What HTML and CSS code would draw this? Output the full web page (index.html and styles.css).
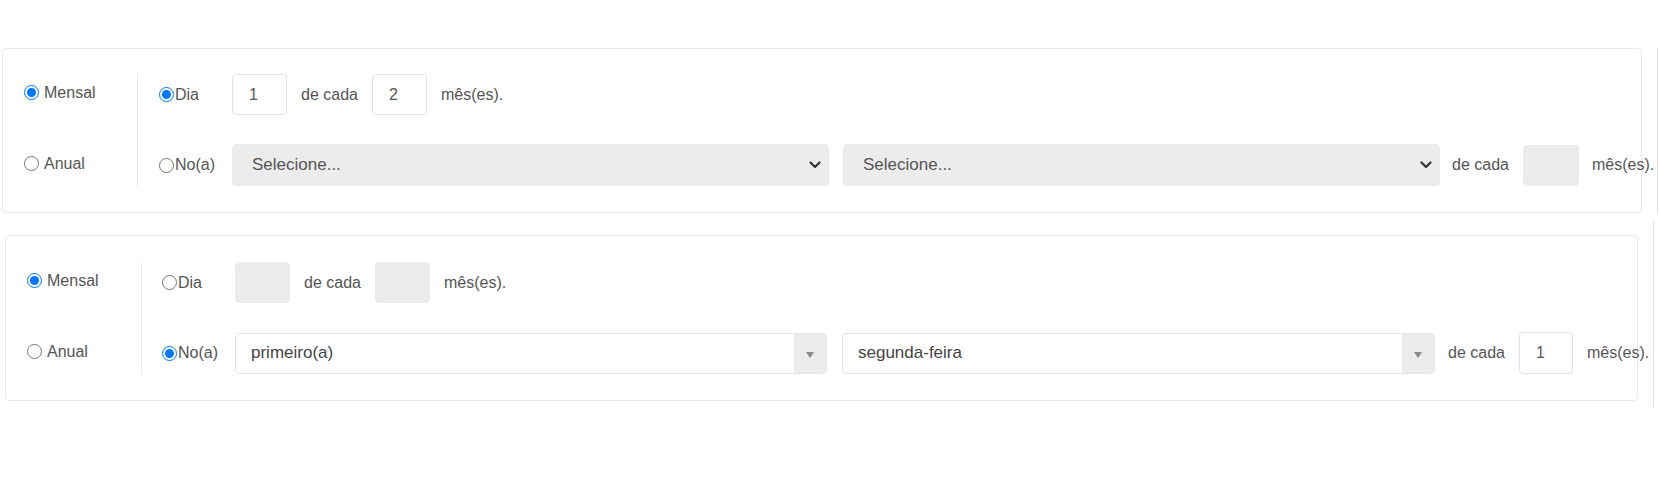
FILE: index.html
```html
<!DOCTYPE html>
<html lang="pt">
<head>
<meta charset="utf-8">
<title>Recorrência</title>
<link rel="stylesheet" href="styles.css">
</head>
<body>
<div class="page">
  <div class="frame frame-a">
    <div class="panel">
      <div class="left">
        <label class="opt"><input type="radio" name="t1" checked><span>Mensal</span></label>
        <label class="opt"><input type="radio" name="t1"><span>Anual</span></label>
      </div>
      <div class="right">
        <div class="row row-1">
          <label class="lbl"><input type="radio" name="m1" checked><span>Dia</span></label>
          <div class="inp">1</div>
          <span class="txt">de cada</span>
          <div class="inp">2</div>
          <span class="txt">mês(es).</span>
        </div>
        <div class="row row-2">
          <label class="lbl"><input type="radio" name="m1"><span>No(a)</span></label>
          <div class="sel sel-w1">
            <span class="sel-text">Selecione...</span>
            <svg class="chev" width="12" height="8" viewBox="0 0 12 8"><path d="M1.5 1.5 L6 6 L10.5 1.5" fill="none" stroke="#343434" stroke-width="2.2" stroke-linecap="round" stroke-linejoin="round"/></svg>
          </div>
          <div class="sel sel-w1">
            <span class="sel-text">Selecione...</span>
            <svg class="chev" width="12" height="8" viewBox="0 0 12 8"><path d="M1.5 1.5 L6 6 L10.5 1.5" fill="none" stroke="#343434" stroke-width="2.2" stroke-linecap="round" stroke-linejoin="round"/></svg>
          </div>
          <span class="txt txt-a">de cada</span>
          <div class="inp inp-off inp-b"></div>
          <span class="txt txt-b">mês(es).</span>
        </div>
      </div>
    </div>
  </div>

  <div class="frame frame-b">
    <div class="panel">
      <div class="left">
        <label class="opt"><input type="radio" name="t2" checked><span>Mensal</span></label>
        <label class="opt"><input type="radio" name="t2"><span>Anual</span></label>
      </div>
      <div class="right">
        <div class="row row-1">
          <label class="lbl"><input type="radio" name="m2"><span>Dia</span></label>
          <div class="inp inp-off"></div>
          <span class="txt">de cada</span>
          <div class="inp inp-off"></div>
          <span class="txt">mês(es).</span>
        </div>
        <div class="row row-2">
          <label class="lbl"><input type="radio" name="m2" checked><span>No(a)</span></label>
          <div class="s2 s2-w1">
            <span class="s2-text">primeiro(a)</span>
            <span class="s2-arrow"><svg width="8" height="6" viewBox="0 0 8 6"><path d="M0 0 H8 L4 6 Z" fill="#8a8a8a"/></svg></span>
          </div>
          <div class="s2 s2-w2">
            <span class="s2-text">segunda-feira</span>
            <span class="s2-arrow"><svg width="8" height="6" viewBox="0 0 8 6"><path d="M0 0 H8 L4 6 Z" fill="#8a8a8a"/></svg></span>
          </div>
          <span class="txt txt-c">de cada</span>
          <div class="inp inp-c">1</div>
          <span class="txt">mês(es).</span>
        </div>
      </div>
    </div>
  </div>
</div>
</body>
</html>
```

FILE: styles.css
```css
* { box-sizing: border-box; }

html, body {
  margin: 0;
  padding: 0;
  background: #ffffff;
}

body {
  font-family: "Liberation Sans", Arial, sans-serif;
  font-size: 16px;
  color: #555555;
}

.page {
  padding-top: 48px;
  display: flex;
  flex-direction: column;
}

.frame {
  border-right: 1px solid #e2e2e2;
}

.frame-a {
  width: 1658px;
  padding-left: 2px;
}

.frame-b {
  width: 1654px;
  margin-top: 8px;
  padding: 14px 0 6px 5px;
}

.panel {
  display: flex;
  border: 1px solid #e9e9e9;
  border-radius: 4px;
  padding: 25px 0 26px 0;
  background: #ffffff;
}

.frame-a .panel { width: 1640px; }
.frame-b .panel { width: 1633px; padding-top: 26px; }

.left {
  flex: none;
  width: 134px;
  padding-left: 21px;
  display: flex;
  flex-direction: column;
  gap: 34px;
}

.frame-b .left { width: 135px; }

.opt {
  height: 37px;
  display: flex;
  align-items: center;
  gap: 5px;
}

input[type="radio"] {
  width: 15px;
  height: 15px;
  margin: 0;
  flex: none;
  accent-color: #0075ff;
}

.right {
  flex: 1;
  border-left: 1px solid #e9e9e9;
  padding-left: 21px;
  display: flex;
  flex-direction: column;
  gap: 29px;
}

.frame-b .right { padding-left: 20px; }

.row {
  display: flex;
  align-items: center;
  gap: 14px;
  white-space: nowrap;
}

.row-1 { height: 41px; }
.row-2 { height: 42px; }

.lbl {
  flex: none;
  width: 59px;
  display: flex;
  align-items: center;
  gap: 1px;
}

.txt { flex: none; }

.inp {
  flex: none;
  width: 55px;
  height: 41px;
  border: 1px solid #dfe2e6;
  border-radius: 4px;
  background: #ffffff;
  padding-left: 16px;
  display: flex;
  align-items: center;
  color: #555555;
}

.inp-off {
  background: #ebebeb;
  border-color: #ebebeb;
}

.inp-b { width: 56px; }
.inp-c { width: 54px; height: 42px; }

.txt-a { margin-left: -2px; }
.txt-b { margin-left: -1px; }
.txt-c { margin-left: -1px; }

.sel {
  flex: none;
  height: 42px;
  background: #ececec;
  border-radius: 4px;
  display: flex;
  align-items: center;
  padding: 0 8px 0 20px;
  font-size: 17px;
  color: #555555;
}

.sel-w1 { width: 597px; }

.sel-text { flex: 1; }

.chev { flex: none; }

.s2 {
  flex: none;
  height: 41px;
  border: 1px solid #e1e4e8;
  border-radius: 4px;
  background: #ffffff;
  display: flex;
  align-items: stretch;
  font-size: 17px;
  color: #444444;
}

.s2-w1 { width: 592px; }
.s2-w2 { width: 593px; margin-left: 1px; }

.s2-text {
  flex: 1;
  display: flex;
  align-items: center;
  padding-left: 15px;
}

.s2-arrow {
  flex: none;
  width: 32px;
  background: #ececec;
  border-radius: 0 3px 3px 0;
  display: flex;
  align-items: center;
  justify-content: center;
  padding-top: 3px;
}
```
